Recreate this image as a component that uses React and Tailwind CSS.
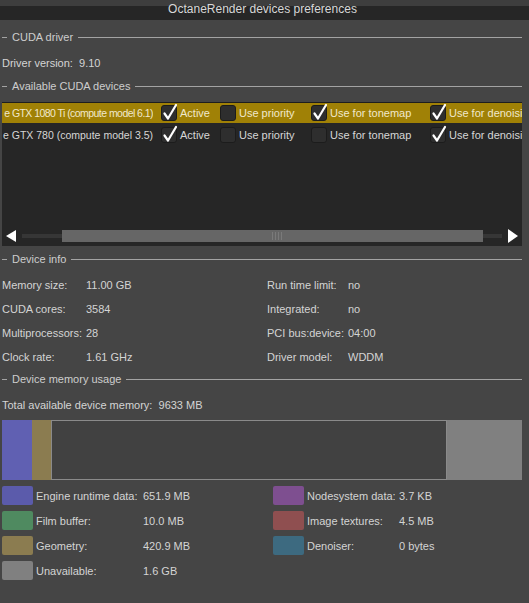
import React from "react";

const FONT = { fontFamily: '"Liberation Sans", Arial, sans-serif' };

function Section({ title, className }) {
  return (
    <div className={"flex items-center h-[18px] " + className}>
      <div className="w-[5px] h-px bg-[#a3a3a3]" />
      <span className="ml-[5px] text-[#cdcdcd] whitespace-nowrap">{title}</span>
      <div className="ml-[5px] flex-1 h-px bg-[#a3a3a3]" />
    </div>
  );
}

function Check({ checked }) {
  return (
    <div className="relative w-[16px] h-[16px] shrink-0 rounded-[3px] bg-[#2e2e2e] border border-[#1c1c1c]">
      {checked && (
        <svg viewBox="0 0 16 18" className="absolute left-[0px] top-[-3px] w-[16px] h-[18px]">
          <path d="M2.5 10.5 L6 15.5 L14 2" stroke="#ffffff" strokeWidth="2.2" fill="none" strokeLinecap="round" strokeLinejoin="round" />
        </svg>
      )}
    </div>
  );
}

function Cell({ checked, label, w }) {
  return (
    <div className={"flex items-center gap-[3px] shrink-0 whitespace-nowrap " + w}>
      <Check checked={checked} />
      <span>{label}</span>
    </div>
  );
}

function DeviceRow({ name, nameCls, active, prio, tone, den, selected }) {
  return (
    <div className={"flex items-center h-[20px] " + (selected ? "bg-[#a08106] text-[#f0e8cc]" : "text-[#d6d6d6]")}>
      <div className="w-[151px] shrink-0 overflow-hidden flex justify-end whitespace-nowrap">
        <span className={nameCls}>{name}</span>
      </div>
      <div className="w-[8px] shrink-0" />
      <Cell checked={active} label="Active" w="w-[59px]" />
      <Cell checked={prio} label="Use priority" w="w-[91px]" />
      <Cell checked={tone} label="Use for tonemap" w="w-[119px]" />
      <Cell checked={den} label="Use for denoising" w="w-[120px]" />
    </div>
  );
}

function InfoRow({ l1, v1, l2, v2 }) {
  return (
    <div className="flex items-center h-[24px]">
      <div className="w-[265px] flex shrink-0">
        <span className="w-[84px] shrink-0">{l1}</span>
        <span>{v1}</span>
      </div>
      <div className="flex">
        <span className="w-[81px] shrink-0">{l2}</span>
        <span>{v2}</span>
      </div>
    </div>
  );
}

function Legend({ color, label, value, lw }) {
  return (
    <div className="flex items-center">
      <div className={"w-[31px] h-[19px] rounded-[2px] shrink-0 " + color} />
      <span className={"ml-[3px] shrink-0 " + lw}>{label}</span>
      <span>{value}</span>
    </div>
  );
}

export default function App() {
  return (
    <div style={FONT} className="w-[529px] h-[603px] overflow-hidden bg-[#454545] text-[11px] leading-[14px] text-[#d4d4d4] flex flex-col">
      <div className="h-[20px] shrink-0 bg-[linear-gradient(to_bottom,#3e3e3e_0px,#3e3e3e_6px,#262626_6px,#262626_100%)] flex justify-center pr-[4px]">
        <span className="text-[12px] leading-[16px] pt-[1px] text-[#d8d8d8]">OctaneRender devices preferences</span>
      </div>

      <div className="flex flex-col pl-[2px] pr-[7px]">
        <Section title="CUDA driver" className="mt-[8px]" />
        <div className="h-[18px] mt-[8px] flex items-center">
          <span>Driver version:&nbsp;&nbsp;9.10</span>
        </div>
        <Section title="Available CUDA devices" className="mt-[5px]" />

        <div className="mt-[7px] h-[144px] bg-[#262626] border-t border-[#1e1e1e] flex flex-col overflow-hidden">
          <DeviceRow name="e GTX 1080 Ti (compute model 6.1)" nameCls="text-[10.5px] tracking-[-0.55px]" active prio={false} tone den selected />
          <div className="h-[2px]" />
          <DeviceRow name="e GTX 780 (compute model 3.5)" nameCls="text-[10.5px]" active prio={false} tone={false} den />
          <div className="flex-1" />
          <div className="h-[14px] mb-[3px] flex items-center">
            <svg viewBox="0 0 10 12" className="ml-[4px] w-[10px] h-[12px] shrink-0">
              <path d="M10 0 L10 12 L0 6 Z" fill="#ffffff" />
            </svg>
            <div className="ml-[6px] flex-1 flex items-center h-[12px]">
              <div className="w-[40px] h-[4px] bg-[#363636]" />
              <div className="w-[421px] h-[12px] bg-[#666666] flex items-center justify-center gap-[2px] pl-[8px]">
                <div className="w-px h-[8px] bg-[#7a7a7a]" />
                <div className="w-px h-[8px] bg-[#7a7a7a]" />
                <div className="w-px h-[8px] bg-[#7a7a7a]" />
                <div className="w-px h-[8px] bg-[#7a7a7a]" />
              </div>
              <div className="flex-1 h-[4px] bg-[#363636]" />
            </div>
            <svg viewBox="0 0 10 14" className="ml-[6px] mr-[4px] w-[10px] h-[14px] shrink-0">
              <path d="M0 0 L0 14 L10 7 Z" fill="#ffffff" />
            </svg>
          </div>
        </div>

        <Section title="Device info" className="mt-[4px]" />
        <div className="mt-[5px] flex flex-col">
          <InfoRow l1="Memory size:" v1="11.00 GB" l2="Run time limit:" v2="no" />
          <InfoRow l1="CUDA cores:" v1="3584" l2="Integrated:" v2="no" />
          <InfoRow l1="Multiprocessors:" v1="28" l2="PCI bus:device:" v2="04:00" />
          <InfoRow l1="Clock rate:" v1="1.61 GHz" l2="Driver model:" v2="WDDM" />
        </div>

        <Section title="Device memory usage" className="mt-[1px]" />
        <div className="h-[18px] mt-[8px] flex items-center">
          <span>Total available device memory:&nbsp;&nbsp;9633 MB</span>
        </div>

        <div className="mt-[6px] h-[60px] flex">
          <div className="w-[30px] bg-[#6060b2]" />
          <div className="w-[19px] bg-[#8b7c50]" />
          <div className="flex-1 border border-[#8a8a8a] bg-[#414141]" />
          <div className="w-[75px] bg-[#808080]" />
        </div>

        <div className="mt-[6px] grid grid-cols-[271px_1fr] gap-y-[6px]">
          <Legend color="bg-[#5b5bab]" label="Engine runtime data:" value="651.9 MB" lw="w-[107px]" />
          <Legend color="bg-[#7e4f90]" label="Nodesystem data:" value="3.7 KB" lw="w-[92px]" />
          <Legend color="bg-[#4f8a60]" label="Film buffer:" value="10.0 MB" lw="w-[107px]" />
          <Legend color="bg-[#8f4f50]" label="Image textures:" value="4.5 MB" lw="w-[92px]" />
          <Legend color="bg-[#8b7c50]" label="Geometry:" value="420.9 MB" lw="w-[107px]" />
          <Legend color="bg-[#3d6a80]" label="Denoiser:" value="0 bytes" lw="w-[92px]" />
          <Legend color="bg-[#808080]" label="Unavailable:" value="1.6 GB" lw="w-[107px]" />
        </div>
      </div>
    </div>
  );
}
